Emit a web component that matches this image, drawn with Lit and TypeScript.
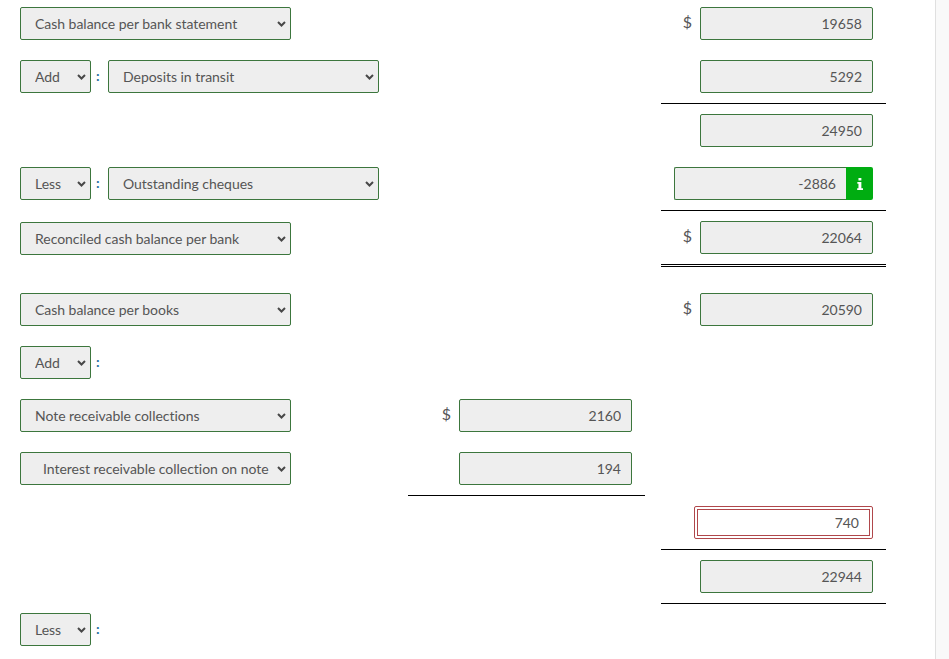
import { LitElement, css, html, nothing } from "lit";
import { customElement } from "lit/decorators.js";

type Row = {
  op?: string;
  label?: string;
  indent?: boolean;
  mid?: string;
  midDollar?: boolean;
  midRule?: boolean;
  right?: string;
  rightDollar?: boolean;
  rightRule?: "single" | "double";
  info?: boolean;
  wrong?: boolean;
  sectionStart?: boolean;
  nudge?: boolean;
  tight?: boolean;
};

const rows: Row[] = [
  { label: "Cash balance per bank statement", right: "19658", rightDollar: true },
  { op: "Add", label: "Deposits in transit", right: "5292", rightRule: "single" },
  { right: "24950" },
  { op: "Less", label: "Outstanding cheques", right: "-2886", info: true, rightRule: "single" },
  {
    label: "Reconciled cash balance per bank",
    right: "22064",
    rightDollar: true,
    rightRule: "double",
    nudge: true,
  },
  { label: "Cash balance per books", right: "20590", rightDollar: true, sectionStart: true },
  { op: "Add" },
  { label: "Note receivable collections", mid: "2160", midDollar: true },
  { label: "Interest receivable collection on note", indent: true, mid: "194", midRule: true },
  { right: "740", wrong: true, rightRule: "single" },
  { right: "22944", rightRule: "single" },
  { op: "Less", tight: true },
];

const ruleClass = { single: "rule", double: "rule-double" };

@customElement("app-root")
export class AppRoot extends LitElement {
  renderLeft(row: Row) {
    const cls = `cell left ${row.nudge ? "nudge" : ""} ${row.tight ? "tight" : ""}`;
    return html`<div class=${cls}>
      ${row.op
        ? html`<select class="op"><option>${row.op}</option></select>
            <span class="colon">:</span>`
        : nothing}
      ${row.label
        ? html`<select class="pick ${row.indent ? "indent" : ""}">
            <option>${row.label}</option>
          </select>`
        : nothing}
    </div>`;
  }

  renderAmount(value: string, row: Row, dollar?: boolean) {
    if (row.wrong) {
      return html`<div class="wrong">
        <input class="wrong-input" .value=${value} readonly />
      </div>`;
    }
    if (row.info) {
      return html`<div class="group">
        <input class="amount joined" .value=${value} readonly />
        <button class="info">
          <svg width="6" height="12" viewBox="0 0 7 13" preserveAspectRatio="none">
            <path
              fill="#fff"
              d="M1.7 0h3.4v2.7H1.7zM.4 4.2h4.7v6.9H7V13H.2v-1.9h1.5V6.1H.4z"
            />
          </svg>
        </button>
      </div>`;
    }
    return html`${dollar ? html`<span class="dollar">$</span>` : nothing}
      <input class="amount" .value=${value} readonly />`;
  }

  render() {
    return html`<div class="page">
        ${rows.map((row) => {
          const midCls = `cell money ${row.midRule ? "rule" : ""}`;
          const rightCls = `cell money right ${row.rightRule ? ruleClass[row.rightRule] : ""}`;
          return html`<div class="row ${row.sectionStart ? "section" : ""}">
            ${this.renderLeft(row)}
            <div class=${midCls}>
              ${row.mid ? this.renderAmount(row.mid, row, row.midDollar) : nothing}
            </div>
            <div class=${rightCls}>
              ${row.right ? this.renderAmount(row.right, row, row.rightDollar) : nothing}
            </div>
          </div>`;
        })}
      </div>
      <div class="scroll-track"></div>`;
  }

  static styles = css`
    :host {
      display: flex;
      height: 100vh;
      overflow: hidden;
      background: #fff;
      font-family: Lato, "Liberation Sans", sans-serif;
      font-size: 14px;
      color: #555;
    }
    .page {
      flex: 1;
      min-width: 0;
      padding-left: 20px;
      margin-top: -3px;
    }
    .scroll-track {
      width: 13px;
      background: #f9f9f9;
      border-left: 1px solid #e0e0e0;
    }
    .row {
      display: grid;
      grid-template-columns: 373px 237px 226px;
      column-gap: 15px;
    }
    .section {
      margin-top: 16px;
    }
    .cell {
      display: flex;
      align-items: flex-start;
      padding: 10px 0;
    }
    .nudge {
      padding-top: 11px;
    }
    .tight {
      padding-top: 9px;
    }
    .money {
      justify-content: flex-end;
      padding-right: 13px;
    }
    .right {
      margin-left: 1px;
    }
    .rule {
      border-bottom: 1px solid #000;
    }
    .rule-double {
      border-bottom: 3px double #000;
    }
    select,
    input {
      box-sizing: border-box;
      height: 33px;
      font: inherit;
      color: #555;
      background-color: #eee;
      border: 1px solid #3c763d;
      border-radius: 2px;
      outline: none;
    }
    select {
      appearance: none;
      padding: 0 0 0 14px;
      letter-spacing: -0.03px;
      background-image: url("data:image/svg+xml,%3Csvg xmlns='http://www.w3.org/2000/svg' width='9' height='6' viewBox='0 0 9 6'%3E%3Cpath d='M1 1l3.5 3.5L8 1' fill='none' stroke='%23484848' stroke-width='2'/%3E%3C/svg%3E");
      background-repeat: no-repeat;
      background-position: right 4px center;
    }
    .op {
      width: 71px;
    }
    .pick {
      width: 271px;
    }
    .indent {
      padding-left: 22px;
    }
    .colon {
      width: 17px;
      padding-left: 5px;
      box-sizing: border-box;
      line-height: 31px;
      color: #1f6f9f;
      font-weight: 700;
    }
    .amount {
      width: 173px;
      padding: 0 10px;
      text-align: right;
    }
    .dollar {
      margin-right: 8px;
      font-size: 16px;
      line-height: 29px;
    }
    .group {
      display: flex;
    }
    .joined {
      width: 172px;
      border-right: 0;
      border-radius: 2px 0 0 2px;
    }
    .info {
      display: flex;
      align-items: center;
      justify-content: center;
      width: 27px;
      height: 33px;
      padding: 0;
      border: 0;
      border-radius: 0 2px 2px 0;
      background: #00ad11;
    }
    .wrong {
      display: flex;
      box-sizing: border-box;
      width: 179px;
      height: 33px;
      padding: 2px;
      border: 1px solid #b0474b;
      border-radius: 2px;
    }
    .wrong-input {
      flex: 1;
      min-width: 0;
      height: 100%;
      padding: 0 10px;
      text-align: right;
      background: #fff;
      border: 1px solid #b0474b;
      border-radius: 0;
    }
  `;
}
